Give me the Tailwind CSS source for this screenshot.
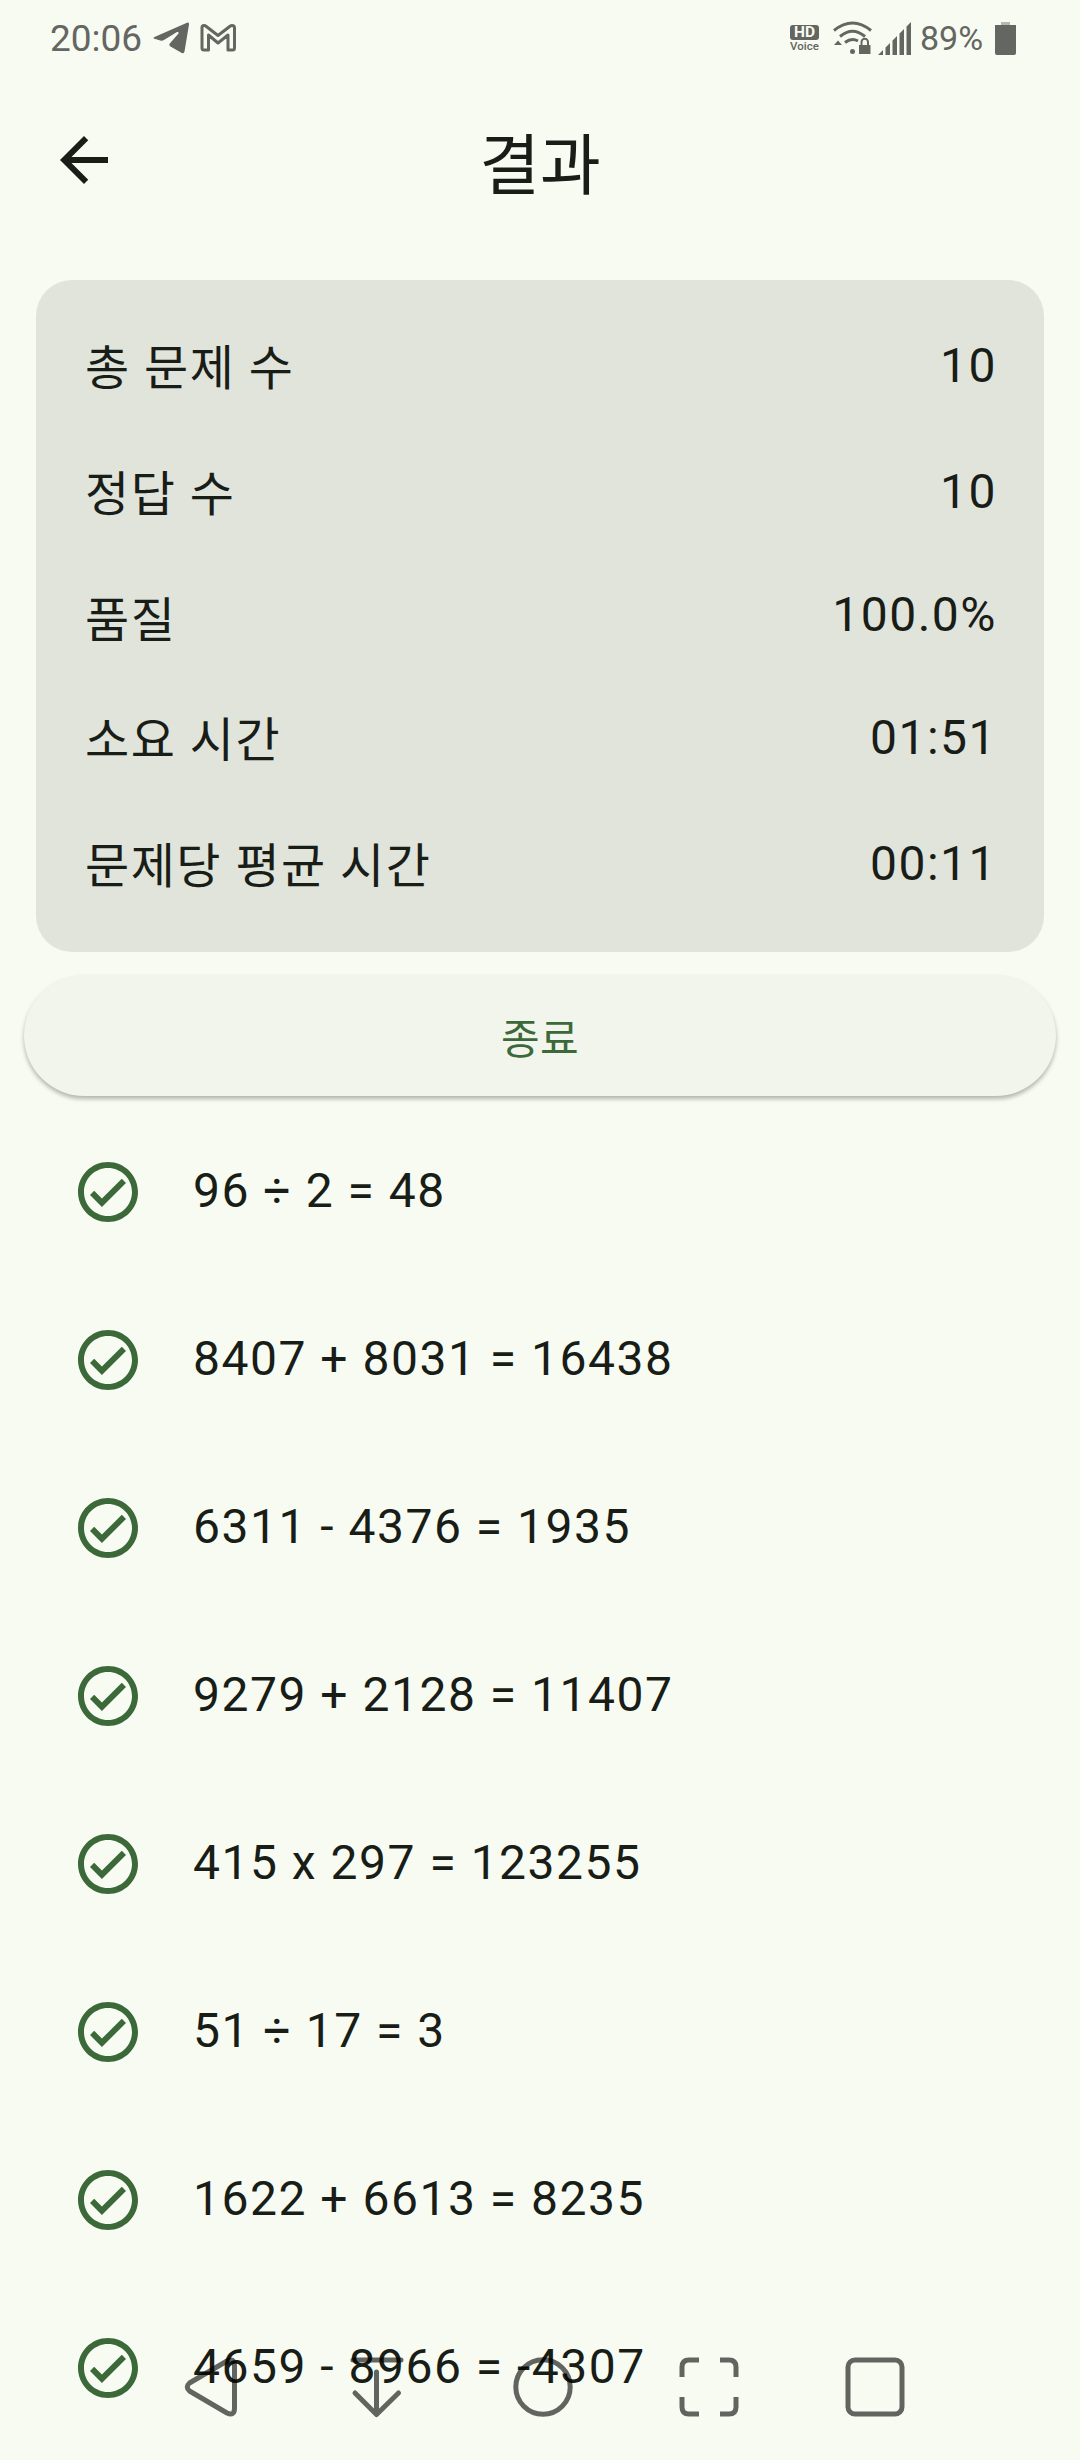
<!DOCTYPE html>
<html lang="ko">
<head>
    <meta charset="UTF-8">
    <meta name="viewport" content="width=device-width, initial-scale=1.0">
    <title>결과</title>
    <script src="https://cdn.jsdelivr.net/npm/@tailwindcss/browser@4"></script>
</head>
<body class="bg-[#f8fbf2] text-[#191d17] font-[Roboto,'Noto_Sans_CJK_KR',sans-serif]">
    <svg class="hidden">
        <symbol id="check-circle" viewBox="0 0 24 24">
            <path d="M16.600 7.600 9.970 14.200 7.400 11.600 6 13 9.970 17 18 9zM12 2C6.480 2 2 6.480 2 12s4.480 10 10 10 10-4.480 10-10S17.520 2 12 2m0 18c-4.420 0-8-3.580-8-8s3.580-8 8-8 8 3.580 8 8-3.580 8-8 8" />
        </symbol>
    </svg>

    <div class="relative flex flex-col w-[1080px] h-[2460px] overflow-hidden">

        <!-- status bar -->
        <div class="flex flex-row shrink-0 justify-between items-center h-[76px] pl-[50px] pr-16 text-[#646661]">
            <div class="flex flex-row items-center">
                <div class="w-[103px] text-[37px] leading-none">20:06</div>
                <svg class="w-9 h-8" viewBox="0 0 36 32" fill="currentColor">
                    <path d="M1.500 15 34 .8Q36.200 0 36 2.500L31.500 29.500Q31 32 28.800 31L17.500 24.500Q15.500 23 17 21.300L25.500 11.500Q26 9.500 24 10L10.500 18.300Q9 19 7.300 18.500L1.500 16.700Q-.3 16 1.500 15Z" />
                </svg>
                <svg class="w-9 h-7 ml-[11px]" viewBox="0 0 36 28" fill="none" stroke="currentColor" stroke-width="3" stroke-linejoin="round">
                    <path d="M2 3.500Q2 1.500 4 1.500 5.200 1.500 6 2.200L18 11.500 30 2.200Q31 1.500 32 1.500 34.500 1.500 34.500 4V24Q34.500 26 32.500 26H28V11L18 19 8.500 11V26H4Q2 26 2 24Z" />
                </svg>
            </div>
            <div class="flex flex-row items-center">
                <div class="flex flex-col items-center w-[29px] mr-[14px]">
                    <div class="w-[29px] h-[15px] rounded-[3px] bg-[#646661] text-center text-[15.5px] leading-[15px] font-bold text-[#f8fbf2]">HD</div>
                    <div class="mt-px text-[11.5px] leading-[11px] font-medium">Voice</div>
                </div>
                <svg class="w-[39px] h-[34px]" viewBox="0 0 39 34" fill="none" stroke="currentColor" stroke-width="3">
                    <path d="M1 9.500Q19.500-5.500 38 9.500M7 15.500Q19.500 5 32 15.500M12 21.500Q18.500 16.500 25 20" />
                    <path d="M1 24 5 19.500 9 24ZM26 24h11.500v9H26Z" fill="currentColor" stroke="none" />
                    <path d="M28.500 24.500v-3.500a3.200 3.200 0 0 1 6.500 0v3.500" stroke-width="2" />
                    <circle cx="19.500" cy="30.500" r="2.500" fill="currentColor" stroke="none" />
                </svg>
                <svg class="w-[33px] h-[33px] ml-[6px]" viewBox="0 0 33 33" fill="currentColor">
                    <path d="M0 33 5 28V33ZM7.500 25.500 12 21V33H7.500ZM14.500 18.500 19 14V33H14.500ZM21.500 11.500 26 7V33H21.500ZM28.500 4.500 33 0V33H28.500Z" />
                </svg>
                <div class="w-[65px] ml-[9px] text-[34px] leading-none">89%</div>
                <svg class="w-[21px] h-[33px] ml-[10px]" viewBox="0 0 21 33" fill="currentColor">
                    <path d="M6 0h9v4H6Z" opacity=".45" />
                    <path d="M0 3H21V31Q21 33 19 33H2Q0 33 0 31Z" />
                </svg>
            </div>
        </div>

        <!-- app bar -->
        <div class="grid grid-cols-3 shrink-0 items-center h-[168px] px-12">
            <svg class="w-[72px] h-[72px]" viewBox="0 0 24 24" fill="currentColor">
                <path d="M20 11H7.830l5.590-5.590L12 4l-8 8 8 8 1.410-1.410L7.830 13H20z" />
            </svg>
            <h1 class="pt-[14px] text-center text-[66px] leading-[84px]">결과</h1>
        </div>

        <!-- summary -->
        <div class="flex flex-col shrink-0 mx-9 mt-9 h-[672px] pl-[49px] pr-[47px] pt-[50px] rounded-[36px] bg-[#e1e4db] text-5xl tracking-[1.5px]">
            <div class="flex flex-row justify-between h-[126px] leading-[72px]">
                <div class="pt-[3px]">총 문제 수</div>
                <div>10</div>
            </div>
            <div class="flex flex-row justify-between h-[123px] leading-[72px]">
                <div class="pt-[3px]">정답 수</div>
                <div>10</div>
            </div>
            <div class="flex flex-row justify-between h-[123px] leading-[72px]">
                <div class="pt-[6px]">품질</div>
                <div>100.0%</div>
            </div>
            <div class="flex flex-row justify-between h-[126px] leading-[72px]">
                <div class="pt-[3px]">소요 시간</div>
                <div>01:51</div>
            </div>
            <div class="flex flex-row justify-between leading-[72px]">
                <div class="pt-[3px]">문제당 평균 시간</div>
                <div>00:11</div>
            </div>
        </div>

        <button class="shrink-0 mx-6 mt-[23px] h-[121px] pt-[7px] rounded-full bg-[#f2f5ec] shadow-[0_3px_4px_rgba(0,0,0,0.28)] text-[42px] tracking-[0.3px] text-[#3c6939]">종료</button>

        <!-- answers -->
        <div class="flex flex-col shrink-0 mt-3 text-5xl tracking-[1.5px]">
            <div class="flex flex-row items-center h-[168px] pl-[72px] gap-[49px]">
                <svg class="w-[72px] h-[72px] fill-[#3c6939]"><use href="#check-circle" /></svg>
                <div class="pb-[3px]">96 ÷ 2 = 48</div>
            </div>
            <div class="flex flex-row items-center h-[168px] pl-[72px] gap-[49px]">
                <svg class="w-[72px] h-[72px] fill-[#3c6939]"><use href="#check-circle" /></svg>
                <div class="pb-[3px]">8407 + 8031 = 16438</div>
            </div>
            <div class="flex flex-row items-center h-[168px] pl-[72px] gap-[49px]">
                <svg class="w-[72px] h-[72px] fill-[#3c6939]"><use href="#check-circle" /></svg>
                <div class="pb-[3px]">6311 - 4376 = 1935</div>
            </div>
            <div class="flex flex-row items-center h-[168px] pl-[72px] gap-[49px]">
                <svg class="w-[72px] h-[72px] fill-[#3c6939]"><use href="#check-circle" /></svg>
                <div class="pb-[3px]">9279 + 2128 = 11407</div>
            </div>
            <div class="flex flex-row items-center h-[168px] pl-[72px] gap-[49px]">
                <svg class="w-[72px] h-[72px] fill-[#3c6939]"><use href="#check-circle" /></svg>
                <div class="pb-[3px]">415 x 297 = 123255</div>
            </div>
            <div class="flex flex-row items-center h-[168px] pl-[72px] gap-[49px]">
                <svg class="w-[72px] h-[72px] fill-[#3c6939]"><use href="#check-circle" /></svg>
                <div class="pb-[3px]">51 ÷ 17 = 3</div>
            </div>
            <div class="flex flex-row items-center h-[168px] pl-[72px] gap-[49px]">
                <svg class="w-[72px] h-[72px] fill-[#3c6939]"><use href="#check-circle" /></svg>
                <div class="pb-[3px]">1622 + 6613 = 8235</div>
            </div>
            <div class="flex flex-row items-center h-[168px] pl-[72px] gap-[49px]">
                <svg class="w-[72px] h-[72px] fill-[#3c6939]"><use href="#check-circle" /></svg>
                <div class="pb-[3px]">4659 - 8966 = -4307</div>
            </div>
        </div>

        <!-- system navigation, drawn over the list -->
        <div class="absolute bottom-0 left-0 flex flex-row items-center w-full h-[146px] px-[179px] gap-[102px] opacity-60">
            <svg class="w-16 h-16 shrink-0" viewBox="0 0 64 64" fill="none" stroke="#000" stroke-width="5" stroke-linejoin="round">
                <path d="M55.500 10.500V53Q55.500 61.500 48 58L10.500 36Q6 32 10.500 28L48 6Q55.500 2.500 55.500 10.500Z" />
            </svg>
            <svg class="w-16 h-16 shrink-0" viewBox="0 0 64 64" fill="none" stroke="#000" stroke-width="5" stroke-linecap="round" stroke-linejoin="round">
                <path d="M8 5H56M31.500 17V59M10 38 31.500 59.500 53.500 38" />
            </svg>
            <svg class="w-16 h-16 shrink-0" viewBox="0 0 64 64" fill="none" stroke="#000" stroke-width="5">
                <circle cx="32" cy="32" r="27.200" />
            </svg>
            <svg class="w-16 h-16 shrink-0" viewBox="0 0 64 64" fill="none" stroke="#000" stroke-width="5">
                <path d="M5 22V12Q5 5 12 5H22M43 5H52Q59 5 59 12V22M59 42V52Q59 59 52 59H43M22 59H12Q5 59 5 52V42" />
            </svg>
            <svg class="w-16 h-16 shrink-0" viewBox="0 0 64 64" fill="none" stroke="#000" stroke-width="5">
                <rect x="5" y="5" width="54" height="54" rx="7" />
            </svg>
        </div>
    </div>
</body>
</html>
